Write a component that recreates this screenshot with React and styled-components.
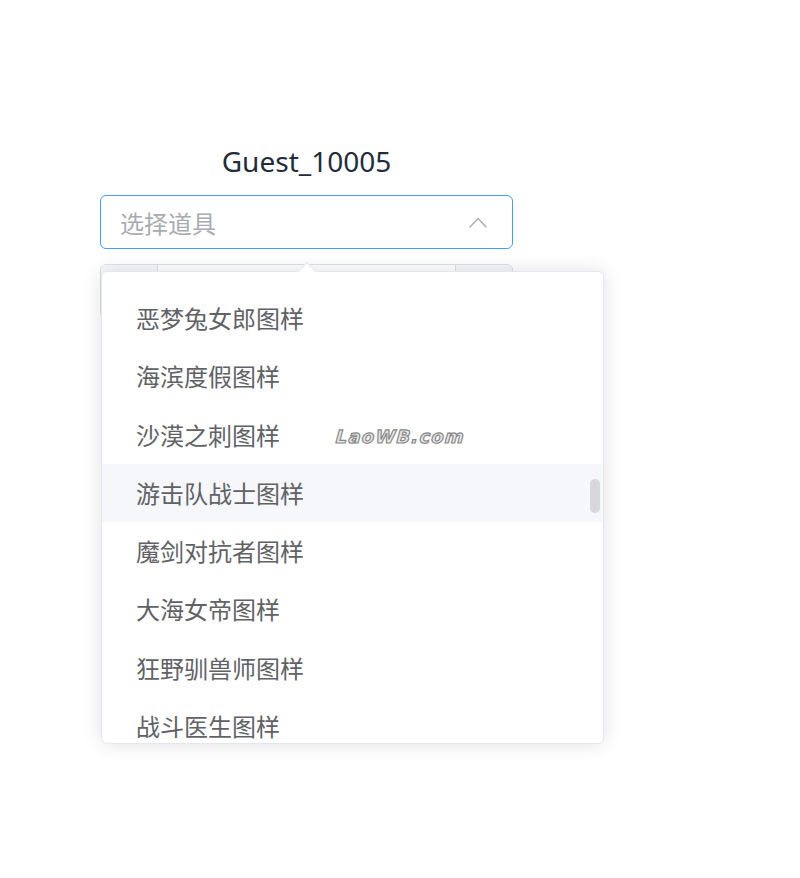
import React from "react";
import styled, { createGlobalStyle } from "styled-components";

const GlobalStyle = createGlobalStyle`
  html, body {
    margin: 0;
    padding: 0;
    background: #ffffff;
  }
  body {
    font-family: "Noto Sans", "Noto Sans CJK SC", sans-serif;
  }
`;

const Page = styled.div`
  position: relative;
  width: 800px;
  height: 878px;
  overflow: hidden;
`;

const Panel = styled.div`
  width: 413px;
  margin-left: 100px;
  padding-top: 141px;
  display: flex;
  flex-direction: column;
`;

const Title = styled.h2`
  margin: 0;
  height: 40px;
  line-height: 40px;
  text-align: center;
  font-size: 28px;
  font-weight: 400;
  color: #1f2d3d;
`;

const SelectWrap = styled.div`
  position: relative;
  margin-top: 14px;
`;

const SelectBox = styled.div`
  box-sizing: border-box;
  height: 54px;
  border: 1px solid #409eff;
  border-radius: 6px;
  display: flex;
  align-items: center;
  padding: 0 22px 0 19px;
  font-family: "Noto Sans CJK SC", sans-serif;
  font-size: 24px;
  color: #a8abb2;
`;

const Placeholder = styled.span`
  flex: 1;
`;

const Chevron = styled.svg`
  width: 24px;
  height: 24px;
  fill: #a8abb2;
`;

const NumberInput = styled.div`
  box-sizing: border-box;
  margin-top: 15px;
  height: 54px;
  border: 1px solid #dcdfe6;
  border-radius: 6px;
  display: flex;
  overflow: hidden;
`;

const StepButton = styled.div`
  width: 56px;
  background: #f5f7fa;
  ${props => (props.$side === "left" ? "border-right" : "border-left")}: 1px solid #dcdfe6;
`;

const NumberField = styled.div`
  flex: 1;
`;

const Dropdown = styled.div`
  position: absolute;
  top: 76px;
  left: 1px;
  width: 503px;
  height: 473px;
  box-sizing: border-box;
  background: #ffffff;
  border: 1px solid #e4e7ed;
  border-radius: 6px;
  box-shadow: 0 0 20px rgba(0, 0, 0, 0.12);
`;

const Arrow = styled.div`
  position: absolute;
  top: -7px;
  left: 198px;
  width: 13px;
  height: 13px;
  background: #ffffff;
  border-top: 1px solid #e4e7ed;
  border-left: 1px solid #e4e7ed;
  transform: rotate(45deg);
`;

const List = styled.ul`
  list-style: none;
  margin: 0;
  padding: 17px 0 0;
  height: 100%;
  box-sizing: border-box;
  overflow: hidden;
  border-radius: 6px;
`;

const Item = styled.li`
  height: 58.3px;
  line-height: 58.3px;
  padding: 0 54px 0 34px;
  font-family: "Noto Sans CJK SC", sans-serif;
  font-size: 24px;
  color: #606266;
  background: ${props => (props.$hover ? "#f5f7fa" : "transparent")};
  white-space: nowrap;
`;

const ScrollThumb = styled.div`
  position: absolute;
  right: 3px;
  top: 207px;
  width: 10px;
  height: 34px;
  border-radius: 5px;
  background: rgba(144, 147, 153, 0.3);
`;

const Watermark = styled.div`
  position: absolute;
  left: 336px;
  top: 426px;
  font-family: "DejaVu Sans", sans-serif;
  font-style: italic;
  font-weight: 700;
  font-size: 18px;
  letter-spacing: 1.2px;
  color: #e8e8e8;
  -webkit-text-stroke: 1.2px #888888;
  transform: skewX(-4deg);
`;

const items = [
  "恶梦兔女郎图样",
  "海滨度假图样",
  "沙漠之刺图样",
  "游击队战士图样",
  "魔剑对抗者图样",
  "大海女帝图样",
  "狂野驯兽师图样",
  "战斗医生图样",
];

export default function App() {
  return (
    <Page>
      <GlobalStyle />
      <Panel>
        <Title>Guest_10005</Title>
        <SelectWrap>
          <SelectBox>
            <Placeholder>选择道具</Placeholder>
            <Chevron viewBox="0 0 1024 1024">
              <path d="M488.832 344.32l-339.84 356.672a32 32 0 0 0 0 44.16l.384.384a29.44 29.44 0 0 0 42.688 0l320-335.872 319.872 335.872a29.44 29.44 0 0 0 42.688 0l.384-.384a32 32 0 0 0 0-44.16L535.168 344.32a32 32 0 0 0-46.336 0z" />
            </Chevron>
          </SelectBox>
          <NumberInput>
            <StepButton $side="left" />
            <NumberField />
            <StepButton $side="right" />
          </NumberInput>
          <Dropdown>
            <Arrow />
            <List>
              {items.map((name, i) => (
                <Item key={name} $hover={i === 3}>
                  {name}
                </Item>
              ))}
            </List>
            <ScrollThumb />
          </Dropdown>
        </SelectWrap>
      </Panel>
      <Watermark>LaoWB.com</Watermark>
    </Page>
  );
}
